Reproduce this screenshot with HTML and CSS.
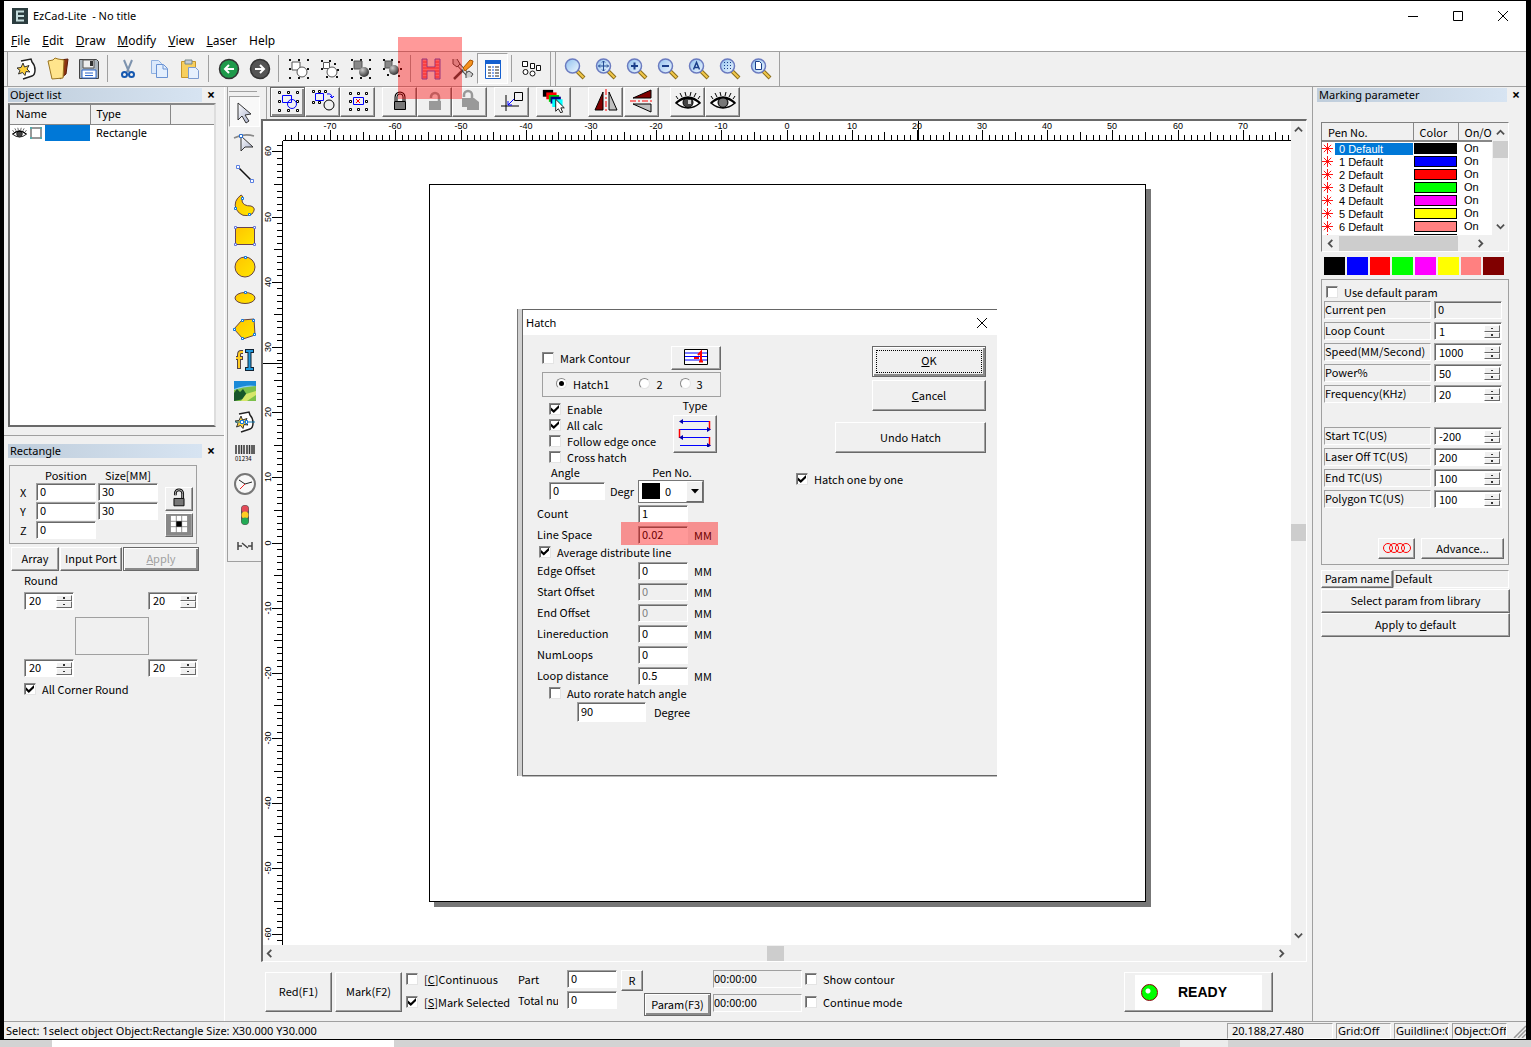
FILE: index.html
```
<!DOCTYPE html>
<html lang="en">
<head>
    <meta charset="UTF-8">
    <title>EzCad-Lite - No title</title>
    <meta name="viewport" content="width=device-width,initial-scale=1.0">
    <link rel="stylesheet" href="styles.css">
</head>
<body>

<!-- shared icon parts -->
<svg class="defs" aria-hidden="true">
    <defs>
        <linearGradient id="lens" x1="0" y1="0" x2="1" y2="1">
            <stop offset="0" stop-color="#8fc0ee"/>
            <stop offset="1" stop-color="#f0f8ff"/>
        </linearGradient>
        <linearGradient id="gold" x1="0" y1="0" x2="1" y2="1">
            <stop offset="0" stop-color="#ffc400"/>
            <stop offset="1" stop-color="#ffe600"/>
        </linearGradient>
        <linearGradient id="steel" x1="0" y1="0" x2="1" y2="1">
            <stop offset="0" stop-color="#fff"/>
            <stop offset="1" stop-color="#a8b0cc"/>
        </linearGradient>
        <radialGradient id="ball" cx=".35" cy=".3" r=".8">
            <stop offset="0" stop-color="#ccc"/>
            <stop offset="1" stop-color="#222"/>
        </radialGradient>
        <symbol id="magnifier" viewBox="0 0 24 24">
            <path d="M14 14l7 7" stroke="#8a6d1a" stroke-width="4"/>
            <path d="M14 14l6.500 6.500" stroke="#f2c84b" stroke-width="2"/>
            <circle cx="9.500" cy="9" r="7" fill="url(#lens)" stroke="#6b7bc0" stroke-width="1.500"/>
        </symbol>
        <symbol id="dots" viewBox="0 0 24 24">
            <path d="M2 2h2v2h-2zM11 2h2v2h-2zM20 2h2v2h-2zM2 11h2v2h-2zM20 11h2v2h-2zM2 20h2v2h-2zM11 20h2v2h-2zM20 20h2v2h-2z" fill="#111"/>
        </symbol>
        <symbol id="handles" viewBox="0 0 24 24">
            <path d="M2.500 2.500h2v2h-2zM11.500 2.500h2v2h-2zM20.500 2.500h2v2h-2zM2.500 11.500h2v2h-2zM20.500 11.500h2v2h-2zM2.500 20.500h2v2h-2zM11.500 20.500h2v2h-2zM20.500 20.500h2v2h-2z" fill="#fff" stroke="#000"/>
        </symbol>
        <symbol id="lock" viewBox="0 0 24 24">
            <path d="M8 12V8a4 4 0 0 1 8 0v4" fill="none" stroke="#000" stroke-width="3"/>
            <path d="M8 12V8a4 4 0 0 1 8 0v4" fill="none" stroke="#ccc"/>
            <path d="M6.500 12.500h11v8h-11z" fill="#777" stroke="#000"/>
        </symbol>
        <symbol id="eye" viewBox="0 0 26 24">
            <path d="M1 14q12-12 24 0q-12 10-24 0z" fill="#fff" stroke="#000" stroke-width="1.500"/>
            <circle cx="13" cy="13.500" r="5" fill="#444" stroke="#000"/>
            <path d="M1 14q12-10 24 0" fill="none" stroke="#000" stroke-width="2"/>
            <path d="M3 10L1 7M7 8L5 4M11 7l-1-4M15 7l1-4M19 8l2-4M23 10l2-3" stroke="#000"/>
        </symbol>
        <symbol id="chevron" viewBox="0 0 10 10">
            <path d="M1 7l4-4 4 4" fill="none" stroke="#505050" stroke-width="2"/>
        </symbol>
        <symbol id="star" viewBox="0 0 12 12">
            <path d="M6 0v12M0 6h12M2 2l8 8M10 2l-8 8" stroke="#f00"/>
        </symbol>
        <symbol id="sheet" viewBox="0 0 24 24">
            <path d="M6 4l10-2 1 3q3 3 3 8t-3 6L8 22" fill="#fff" stroke="#222" stroke-width="1.500"/>
            <path d="M8 6l1.500 4 4.500-1.500-2 3.500 3 3-4-.5-1 4-2.500-3-4 1.500 1.500-3.500-3-2.500 4-.5z" fill="#ffd23c" stroke="#333"/>
        </symbol>
    </defs>
</svg>

<div class="window">
    <header class="title-bar">
        <svg class="app-icon" viewBox="0 0 16 16"><path d="M0 0h16v16H0z" fill="#2b3d3f"/><path d="M12 3.500H5v9h7M5 8h7" fill="none" stroke="#c4dcdc" stroke-width="2"/></svg>
        <h1>EzCad-Lite &nbsp;- No title</h1>
        <div class="window-buttons">
            <button aria-label="Minimize"><svg viewBox="0 0 12 12"><path d="M1 6.500h10" stroke="#000"/></svg></button>
            <button aria-label="Maximize"><svg viewBox="0 0 12 12"><path d="M1.500 1.500h9v9h-9z" fill="none" stroke="#000"/></svg></button>
            <button aria-label="Close"><svg viewBox="0 0 12 12"><path d="M1 1l10 10M11 1L1 11" stroke="#000"/></svg></button>
        </div>
    </header>

    <nav class="menu-bar">
        <a href="#"><u>F</u>ile</a>
        <a href="#"><u>E</u>dit</a>
        <a href="#"><u>D</u>raw</a>
        <a href="#"><u>M</u>odify</a>
        <a href="#"><u>V</u>iew</a>
        <a href="#"><u>L</u>aser</a>
        <a href="#">Help</a>
    </nav>

    <div class="toolbar">
        <div class="tool-group">
            <button aria-label="New"><svg viewBox="0 0 24 24"><use href="#sheet"/></svg></button>
            <button aria-label="Open"><svg viewBox="0 0 24 24"><path d="M14 3l8-1-2 15-6 5z" fill="#8c3412" stroke="#5a1a08"/><path d="M2 4l5-1 2-2 3 1 6 1-1 18-11 1z" fill="#ffe48c" stroke="#9a7420"/></svg></button>
            <button aria-label="Save"><svg viewBox="0 0 24 24"><path d="M2.500 2.500h17l2 2v17h-19z" fill="#aab4bc" stroke="#444"/><path d="M6 3h11v8H6z" fill="#eee" stroke="#555"/><path d="M13 4h3v5h-3z" fill="#333"/><path d="M5 13h14v8H5z" fill="#fff" stroke="#2a66cc"/><path d="M8 16h8M8 18.500h8" stroke="#2a66cc"/></svg></button>
            <i class="sep"></i>
            <button aria-label="Cut"><svg viewBox="0 0 24 24"><path d="M8 3l5 12M16 3l-5 12" stroke="#7d93ae" stroke-width="2"/><circle cx="8.500" cy="17.500" r="2.500" fill="none" stroke="#1558b0" stroke-width="2"/><circle cx="15.500" cy="17.500" r="2.500" fill="none" stroke="#1558b0" stroke-width="2"/></svg></button>
            <button aria-label="Copy"><svg viewBox="0 0 24 24"><path d="M4.500 3.500h7l3 3v10h-10z" fill="#dbe9fb" stroke="#8fb0e0"/><path d="M9.500 7.500h7l4 4v9h-11z" fill="#e4effd" stroke="#6a93d4"/><path d="M16 8v4h4" fill="none" stroke="#6a93d4"/></svg></button>
            <button aria-label="Paste"><svg viewBox="0 0 24 24"><path d="M3.500 4.500h14v16h-14z" fill="#f7cf5e" stroke="#c7962a"/><path d="M7 3h7v4H7z" fill="#c4ccd8" stroke="#788"/><path d="M10.500 10.500h7l3 3v8h-10z" fill="#e6f0fd" stroke="#7c9bd0"/></svg></button>
            <i class="sep"></i>
            <button aria-label="Undo"><svg viewBox="0 0 24 24"><circle cx="12" cy="12" r="9.500" fill="#1f9a4b" stroke="#333" stroke-width="1.500"/><path d="M17 12H8M12 8l-4 4 4 4" fill="none" stroke="#fff" stroke-width="2"/></svg></button>
            <button aria-label="Redo"><svg viewBox="0 0 24 24"><circle cx="12" cy="12" r="9.500" fill="#555" stroke="#333" stroke-width="1.500"/><path d="M7 12h9M12 8l4 4-4 4" fill="none" stroke="#fff" stroke-width="2"/></svg></button>
            <i class="sep"></i>
            <button aria-label="Combine"><svg viewBox="0 0 24 24"><use href="#dots"/><path d="M5 5h8v8H5z" fill="#fff" stroke="#555"/><circle cx="15" cy="15" r="5" fill="#fff" stroke="#555"/></svg></button>
            <button aria-label="Uncombine"><svg viewBox="0 0 24 24"><path d="M3 3h2v2H3zM11 3h2v2h-2zM3 11h2v2H3zM16 6h2v2h-2zM19 12h2v2h-2zM18 19h2v2h-2zM8 19h2v2H8z" fill="#111"/><path d="M5.500 5.500h6v6h-6z" fill="#fff" stroke="#555"/><circle cx="14" cy="15" r="5" fill="#fff" stroke="#555"/></svg></button>
            <button aria-label="Group"><svg viewBox="0 0 24 24"><use href="#dots"/><path d="M5 4h8v8H5z" fill="#888" stroke="#555"/><circle cx="15" cy="15" r="5" fill="url(#ball)"/></svg></button>
            <button aria-label="Ungroup"><svg viewBox="0 0 24 24"><path d="M3 2h2v2H3zM11 2h2v2h-2zM3 11h2v2H3zM18 4h2v2h-2zM20 11h2v2h-2zM18 18h2v2h-2zM7 17h2v2H7z" fill="#111"/><path d="M5 4h7v7H5z" fill="#888" stroke="#555"/><circle cx="14" cy="13" r="5" fill="url(#ball)"/></svg></button>
            <i class="sep"></i>
            <button aria-label="Hatch"><svg viewBox="0 0 24 24"><path d="M3 2h5v8h8V2h5v20h-5v-8H8v8H3z" fill="#f99" stroke="#55c"/><path d="M4 5h4M4 8h4M4 11h16M4 14h4M4 17h4M4 20h4M16 5h4M16 8h4M16 14h4M16 17h4M16 20h4" stroke="#e44"/></svg></button>
            <button aria-label="Options"><svg viewBox="0 0 24 24"><path d="M6 5l12 13" stroke="#444" stroke-width="4"/><path d="M6 5l12 13" stroke="#ddd" stroke-width="2"/><path d="M3 2v5l4 3 3-3-3-5M16 21v-5l3-2 4 3-2 3" fill="#ccc" stroke="#444"/><path d="M13 11l7-8 3 1-1 4-7 6z" fill="#f5921e" stroke="#a85400"/><path d="M13 13l-9 9" stroke="#444" stroke-width="2.500"/></svg></button>
            <button class="active" aria-label="Parameter list"><svg viewBox="0 0 24 24"><path d="M4.500 3.500h15v18h-15z" fill="#fff" stroke="#1560d0"/><path d="M4 3h16v4H4z" fill="#1560d0"/><path d="M7 10h3M7 13h3M7 16h3M7 19h3M14 10h4M14 13h4M14 16h4M14 19h4" stroke="#222"/><path d="M11 10h2M11 13h2M11 16h2M11 19h2" stroke="#15d"/></svg></button>
            <i class="sep"></i>
            <button aria-label="Sort objects"><svg viewBox="0 0 24 24"><path d="M2.500 4.500h5v5h-5zM10.500 6.500h4v5h-4zM16.500 8.500h4v5h-4z" fill="#fff" stroke="#111"/><circle cx="5.500" cy="15" r="2.500" fill="#fff" stroke="#111"/><circle cx="12.500" cy="16.500" r="2.500" fill="#fff" stroke="#111"/></svg></button>
        </div>
        <div class="tool-group">
            <button aria-label="Zoom"><svg viewBox="0 0 24 24"><use href="#magnifier"/></svg></button>
            <button aria-label="Pan"><svg viewBox="0 0 24 24"><use href="#magnifier"/><path d="M9.500 4v10M4.500 9h10M8 5.500l1.500-1.500 1.500 1.500M8 12.500l1.500 1.500 1.500-1.500M6 7.500l-1.500 1.500L6 10.500M13 7.500l1.500 1.500-1.500 1.500" fill="none" stroke="#234a94"/></svg></button>
            <button aria-label="Zoom in"><svg viewBox="0 0 24 24"><use href="#magnifier"/><path d="M9.500 5.500v7M6 9h7" stroke="#1a3f8a" stroke-width="2"/></svg></button>
            <button aria-label="Zoom out"><svg viewBox="0 0 24 24"><use href="#magnifier"/><path d="M6 9h7" stroke="#1a3f8a" stroke-width="2"/></svg></button>
            <button aria-label="Zoom all"><svg viewBox="0 0 24 24"><use href="#magnifier"/><path d="M6.500 12.500l3-7 3 7M7.500 10.500h4" fill="none" stroke="#1a3f8a" stroke-width="1.500"/></svg></button>
            <button aria-label="Zoom selection"><svg viewBox="0 0 24 24"><use href="#magnifier"/><path d="M6 5h1v1H6zM9 5h1v1H9zM12 5h1v1h-1zM6 8h1v1H6zM12 8h1v1h-1zM9 8h1v1H9zM6 11h1v1H6zM9 11h1v1H9zM12 11h1v1h-1z" fill="#1a3f8a"/></svg></button>
            <button aria-label="Zoom page"><svg viewBox="0 0 24 24"><use href="#magnifier"/><path d="M6.500 4.500h4l2 2v6h-6z" fill="#fff" stroke="#1a3f8a"/></svg></button>
        </div>
    </div>

    <div class="workspace">
        <aside class="left-panel">
            <section class="object-panel">
                <div class="panel-title"><h2>Object list</h2><button aria-label="Close object list">×</button></div>
                <div class="object-list">
                    <table>
                        <thead><tr><th>Name</th><th>Type</th><th></th></tr></thead>
                        <tbody>
                        <tr>
                            <td>
                                <div class="object-name">
                                    <svg class="mini-eye" viewBox="0 0 26 24"><use href="#eye"/></svg>
                                    <svg class="mini-rect" viewBox="0 0 14 14"><path d="M2 2h10v10H2z" fill="#fff" stroke="#333"/><path d="M1 1h2v2H1zM11 1h2v2h-2zM1 11h2v2H1zM11 11h2v2h-2z" fill="#5aa"/></svg>
                                    <span></span>
                                </div>
                            </td>
                            <td>Rectangle</td>
                            <td></td>
                        </tr>
                        </tbody>
                    </table>
                </div>
            </section>

            <section class="rect-panel">
                <div class="panel-title"><h2>Rectangle</h2><button aria-label="Close rectangle panel">×</button></div>
                <div class="position-box">
                    <div class="position-grid">
                        <span></span><span class="col-head">Position</span><span class="col-head">Size[MM]</span>
                        <label for="pos-x">X</label><input id="pos-x" class="field" value="0"><input class="field" aria-label="Width" value="30">
                        <label for="pos-y">Y</label><input id="pos-y" class="field" value="0"><input class="field" aria-label="Height" value="30">
                        <label for="pos-z">Z</label><input id="pos-z" class="field" value="0">
                    </div>
                    <div class="position-buttons">
                        <button class="btn" aria-label="Lock ratio"><svg viewBox="0 0 24 24"><path d="M8 9V7a4 4 0 0 1 8 0v5" fill="none" stroke="#000" stroke-width="3"/><path d="M8 9V7a4 4 0 0 1 8 0v5" fill="none" stroke="#ccc"/><path d="M6.500 12.500h11v8h-11z" fill="#777" stroke="#000"/></svg></button>
                        <button class="btn anchor" aria-label="Anchor point"><svg viewBox="0 0 20 20"><path d="M1 1h18v18H1z" fill="#fff"/><path d="M7 0v20M13 0v20M0 7h20M0 13h20" stroke="#888"/><path d="M7 7h6v6H7z"/></svg></button>
                    </div>
                </div>
                <div class="rect-actions">
                    <button class="btn">Array</button>
                    <button class="btn">Input Port</button>
                    <button class="btn default" disabled><u>A</u>pply</button>
                </div>
                <div class="round">
                    <div class="round-title">Round</div>
                    <div class="round-row">
                        <span class="spin"><input aria-label="Top left" value="20"><span><button></button><button></button></span></span>
                        <span class="spin"><input aria-label="Top right" value="20"><span><button></button><button></button></span></span>
                    </div>
                    <div class="round-preview"></div>
                    <div class="round-row">
                        <span class="spin"><input aria-label="Bottom left" value="20"><span><button></button><button></button></span></span>
                        <span class="spin"><input aria-label="Bottom right" value="20"><span><button></button><button></button></span></span>
                    </div>
                    <label class="check"><input type="checkbox" checked>All Corner Round</label>
                </div>
            </section>
        </aside>

        <div class="draw-column">
            <div class="draw-tools">
                <button class="active" aria-label="Pick"><svg viewBox="0 0 24 24"><path d="M5 3l13 11-6 1 4 6-3 2-4-7-4 4z" fill="url(#steel)" stroke="#333"/></svg></button>
                <button aria-label="Edit node"><svg viewBox="0 0 24 24"><path d="M1 7q10-5 20-2" fill="none" stroke="#888" stroke-width="1.500"/><path d="M8 5v15l4-4h8z" fill="url(#steel)" stroke="#333"/><path d="M6.500 3.500h3v3h-3z" fill="#fff" stroke="#2a6fd0"/></svg></button>
                <button aria-label="Line"><svg viewBox="0 0 24 24"><path d="M5 5l14 14" stroke="#111" stroke-width="1.500"/><path d="M3.500 3.500h3v3h-3zM17.500 17.500h3v3h-3z" fill="#fff" stroke="#5a7fe0"/></svg></button>
                <button aria-label="Curve"><svg viewBox="0 0 24 24"><path d="M8 2q-8 6-5 14 6 10 16 5 5-6-1-8-8 0-9-5 2-5-1-6z" fill="url(#gold)" stroke="#644"/><path d="M8.500 4.500h2v2h-2zM1.500 14.500h2v2h-2zM15.500 20.500h2v2h-2z" fill="#fff" stroke="#17d"/></svg></button>
                <button aria-label="Rectangle"><svg viewBox="0 0 24 24"><path d="M2.500 3.500h19v17h-19z" fill="url(#gold)" stroke="#645"/><path d="M1.500 2.500h2v2h-2zM20.500 2.500h2v2h-2zM1.500 19.500h2v2h-2zM20.500 19.500h2v2h-2z" fill="#fff" stroke="#67d"/></svg></button>
                <button aria-label="Circle"><svg viewBox="0 0 24 24"><circle cx="12" cy="12" r="10" fill="url(#gold)" stroke="#644"/><path d="M11.500 1.500h2v2h-2z" fill="#fff" stroke="#17d"/></svg></button>
                <button aria-label="Ellipse"><svg viewBox="0 0 24 24"><ellipse cx="12" cy="12" rx="10" ry="5.500" fill="url(#gold)" stroke="#644"/><path d="M11.500 5.500h2v2h-2z" fill="#fff" stroke="#17d"/></svg></button>
                <button aria-label="Polygon"><svg viewBox="0 0 24 24"><path d="M1 12l8-9 12-1 1 16-12 4z" fill="url(#gold)" stroke="#644"/><path d="M.5 11.500h2v2h-2zM8.500 2.500h2v2h-2zM19.500 2.500h2v2h-2zM20.500 16.500h2v2h-2zM8.500 20.500h2v2h-2z" fill="#fff" stroke="#17d"/></svg></button>
                <button aria-label="Text"><svg viewBox="0 0 24 24"><path d="M10 4H8Q6 4 6 7v14M3 10h7" fill="none" stroke="#544" stroke-width="4"/><path d="M10 4H8Q6 4 6 7v13M3 10h6" fill="none" stroke="#fc2" stroke-width="2"/><path d="M12 3h9M16.500 3v18M12 21h9" stroke="#123" stroke-width="4"/><path d="M13 3h7M16.500 3v18M13 21h7" stroke="#29d" stroke-width="2"/></svg></button>
                <button aria-label="Bitmap"><svg viewBox="0 0 24 24"><path d="M1 2h22v20H1z" fill="#8fd0f4"/><path d="M1 2h22v5q-9-2-22 3z" fill="#1a8ad8"/><path d="M1 11q8-3 22-4v15H1z" fill="#7cc04a"/><path d="M1 14l3-4 3 3 3-3 4 6 2 3-15 3z" fill="#17562a"/><path d="M13 15l10-3v4l-9 6H8z" fill="#d6e66a"/></svg></button>
                <button aria-label="Vector file"><svg viewBox="0 0 24 24"><use href="#sheet"/><path d="M2 12h20" stroke="#17a"/><path d="M7.500 10.500h3v3h-3zM12.500 10.500h2v3h-2z" fill="#fff" stroke="#17d"/></svg></button>
                <button aria-label="Barcode"><svg viewBox="0 0 24 24"><path d="M3 4v9M6 4v9M8.500 4v9M11 4v9M14 4v9M16.500 4v9M19 4v9M21 4v9" stroke="#333" stroke-width="1.500"/><text x="2" y="20" font-size="6">01234</text></svg></button>
                <button aria-label="Timer"><svg viewBox="0 0 24 24"><circle cx="12" cy="12" r="10" fill="#f8f8f8" stroke="#777" stroke-width="2"/><path d="M6 8l6 4 7-2" fill="none" stroke="#222"/><path d="M12 12l-5 5" stroke="#e22"/></svg></button>
                <button aria-label="Input output"><svg viewBox="0 0 24 24"><rect x="8" y="2" width="8" height="20" rx="4" fill="#555"/><circle cx="12" cy="6" r="3.500" fill="#e34a58"/><circle cx="12" cy="12" r="3.500" fill="#fc2"/><circle cx="12" cy="18" r="3.500" fill="#2a5"/></svg></button>
                <button aria-label="Extend axis"><svg viewBox="0 0 24 24"><path d="M5 8v8M5 12h4M9 9l6 5M15 12h4M19 8v8" fill="none" stroke="#444" stroke-width="1.500"/></svg></button>
            </div>
        </div>

        <main class="center">
            <div class="edit-bar">
                <button class="btn default" aria-label="Move"><svg viewBox="0 0 24 24"><use href="#handles"/><path d="M6.500 6.500h9v7h-9z" fill="none" stroke="#00f"/><circle cx="16" cy="15" r="4.500" fill="none" stroke="#00f"/></svg></button>
                <button class="btn" aria-label="Rotate"><svg viewBox="0 0 24 24"><path d="M1.500 1.500h2v2h-2zM7.500 1.500h2v2h-2zM13.500 1.500h2v2h-2zM1.500 12.500h2v2h-2zM7.500 12.500h2v2h-2z" fill="#fff" stroke="#000"/><path d="M4.500 4.500h8v7h-8zM16 5q5-1 5 4M19 7l2 2 2-2" fill="none" stroke="#00f"/><circle cx="18" cy="16" r="5" fill="none" stroke="#000"/></svg></button>
                <button class="btn" aria-label="Select handles"><svg viewBox="0 0 24 24"><path d="M3.500 3.500h2v2h-2zM11.500 3.500h2v2h-2zM19.500 3.500h2v2h-2zM3.500 11.500h2v2h-2zM19.500 11.500h2v2h-2zM3.500 19.500h2v2h-2zM11.500 19.500h2v2h-2zM19.500 19.500h2v2h-2z" fill="#fff" stroke="#000"/><path d="M7.500 8.500h10v7h-10z" fill="none" stroke="#00f"/><path d="M10 10l4 4M14 10l-4 4" stroke="#f00"/></svg></button>
                <button class="btn gap-s" aria-label="Lock"><svg viewBox="0 0 24 24"><use href="#lock"/></svg></button>
                <button class="btn" aria-label="Unlock"><svg viewBox="0 0 24 24"><path d="M8 9V8a4 4 0 0 1 8 0v4" fill="none" stroke="#999" stroke-width="2.500"/><path d="M6 12h12v9H6z" fill="#999"/></svg></button>
                <button class="btn" aria-label="Unlock all"><svg viewBox="0 0 24 24"><path d="M6 8V6a4 4 0 0 1 8 0v5" fill="none" stroke="#999" stroke-width="2.500"/><path d="M4 9h12l5 4v8H9v-3H4z" fill="#999"/></svg></button>
                <button class="btn gap-s" aria-label="Put to origin"><svg viewBox="0 0 24 24"><path d="M6 6v16M1 17h18M14.500 3.500h8v8h-8z" fill="none" stroke="#000"/><path d="M14 10l-6 6M8 12v4h4" fill="none" stroke="#00f"/></svg></button>
                <button class="btn gap-s" aria-label="Pick by colour"><svg viewBox="0 0 28 28"><path d="M1 1h12v8H1z"/><path d="M5 4h12v8H5z" fill="#f00"/><path d="M8 7h12v8H8z" fill="#0c0"/><path d="M10 9h12v8H10z" fill="#008"/><path d="M12 12h12v9H12z" fill="#0ff"/><path d="M16 12v14l3-3 3 5 2-1-2-5h4z" fill="#fff" stroke="#000"/></svg></button>
                <button class="btn gap-l" aria-label="Mirror horizontally"><svg viewBox="0 0 24 24"><path d="M9 3v18H1z" fill="#800000" stroke="#000"/><path d="M15 3v18h8z" fill="#c0c0c0" stroke="#000"/><path d="M12 0v24" stroke="#f00" stroke-dasharray="6 2 2 2"/></svg></button>
                <button class="btn gap-xs" aria-label="Mirror vertically"><svg viewBox="0 0 24 24"><path d="M21 9V1L3 9z" fill="#800000" stroke="#000"/><path d="M21 15v8L3 15z" fill="#c0c0c0" stroke="#000"/><path d="M0 12h24" stroke="#f00" stroke-dasharray="6 2 2 2"/></svg></button>
                <button class="btn gap-m" aria-label="Show"><svg class="wide" viewBox="0 0 26 24"><use href="#eye"/><path d="M13 12h3M13 14h3" stroke="#fff" stroke-width="1.500"/></svg></button>
                <button class="btn" aria-label="Hide"><svg class="wide" viewBox="0 0 26 24"><use href="#eye"/><circle cx="13" cy="13.500" r="4" fill="#777"/></svg></button>
            </div>

            <div class="canvas-frame">
                <div class="ruler-corner"></div>
                <svg class="ruler ruler-top" id="ruler-top"></svg>
                <div class="scroll-v">
                    <svg viewBox="0 0 10 10"><use href="#chevron"/></svg>
                    <i></i>
                    <svg class="down" viewBox="0 0 10 10"><use href="#chevron"/></svg>
                </div>
                <svg class="ruler ruler-left" id="ruler-left"></svg>
                <div class="stage">
                    <div class="paper"></div>

                    <div class="dialog" role="dialog" aria-labelledby="hatch-title">
                        <div class="dialog-inner">
                            <div class="dialog-title">
                                <h2 id="hatch-title">Hatch</h2>
                                <button aria-label="Close dialog"><svg viewBox="0 0 12 12"><path d="M1 1l10 10M11 1L1 11" stroke="#000"/></svg></button>
                            </div>
                            <div class="dialog-body">
                                <div class="hatch-form">
                                    <div class="contour-row">
                                        <label class="check"><input type="checkbox">Mark Contour</label>
                                        <button class="btn" aria-label="Contour order"><svg viewBox="0 0 24 16"><path d="M.5.5h23v15H.5z" fill="#fff" stroke="#000"/><path d="M1 4h22M1 7.500h22M1 11h22" stroke="#00f"/><path d="M17 13V3l-3 3M10 9h5M15 12.500h4" fill="none" stroke="#f00" stroke-width="2"/></svg></button>
                                    </div>
                                    <div class="hatch-set">
                                        <label class="check"><input type="radio" name="set" checked>Hatch1</label>
                                        <label class="check"><input type="radio" name="set">2</label>
                                        <label class="check"><input type="radio" name="set">3</label>
                                    </div>
                                    <div class="options-row">
                                        <div class="options">
                                            <label class="check"><input type="checkbox" checked>Enable</label>
                                            <label class="check"><input type="checkbox" checked>All calc</label>
                                            <label class="check"><input type="checkbox">Follow edge once</label>
                                            <label class="check"><input type="checkbox">Cross hatch</label>
                                        </div>
                                        <div class="type">
                                            <span>Type</span>
                                            <button class="btn" aria-label="Hatch type"><svg viewBox="0 0 34 28"><path d="M2 2.500h30M2 10.500h30M2 18.500h30M2 26.500h30" stroke="#00f"/><path d="M31.500 2v9M1.500 10v9M31.500 18v9" stroke="#f00" stroke-width="1.500"/><path d="M5 0v5L1 2.500zM29 8v5l4-2.500zM5 16v5l-4-2.500zM29 24v5l4-2.500z" fill="#00a"/></svg></button>
                                        </div>
                                    </div>
                                    <div class="angle-grid">
                                        <label for="angle">Angle</label><span></span><label for="pen">Pen No.</label>
                                        <input id="angle" class="field" value="0">
                                        <span>Degr</span>
                                        <div class="combo"><i></i><select id="pen"><option>0</option></select><b><svg viewBox="0 0 8 5"><path d="M0 0h8L4 4.500z"/></svg></b></div>
                                    </div>
                                    <div class="form-row"><label for="count">Count</label><input id="count" class="field" value="1"></div>
                                    <div class="form-row marked"><label for="space">Line Space</label><input id="space" class="field" value="0.02"><span>MM</span></div>
                                    <label class="check average"><input type="checkbox" checked>Average distribute line</label>
                                    <div class="form-row"><label for="edge">Edge Offset</label><input id="edge" class="field" value="0"><span>MM</span></div>
                                    <div class="form-row"><label for="start">Start Offset</label><input id="start" class="field" value="0" disabled><span>MM</span></div>
                                    <div class="form-row"><label for="end">End Offset</label><input id="end" class="field" value="0" disabled><span>MM</span></div>
                                    <div class="form-row"><label for="reduction">Linereduction</label><input id="reduction" class="field" value="0"><span>MM</span></div>
                                    <div class="form-row"><label for="loops">NumLoops</label><input id="loops" class="field" value="0"></div>
                                    <div class="form-row"><label for="distance">Loop distance</label><input id="distance" class="field" value="0.5"><span>MM</span></div>
                                    <label class="check auto"><input type="checkbox">Auto rorate hatch angle</label>
                                    <div class="degree-row"><input id="degree" class="field" value="90"><label for="degree">Degree</label></div>
                                </div>
                                <div class="dialog-actions">
                                    <button class="btn default ok"><span><u>O</u>K</span></button>
                                    <button class="btn"><u>C</u>ancel</button>
                                    <button class="btn undo">Undo Hatch</button>
                                    <label class="check"><input type="checkbox" checked>Hatch one by one</label>
                                </div>
                            </div>
                        </div>
                    </div>
                </div>
                <div class="scroll-h">
                    <svg class="left" viewBox="0 0 10 10"><use href="#chevron"/></svg>
                    <i></i>
                    <svg class="right" viewBox="0 0 10 10"><use href="#chevron"/></svg>
                </div>
            </div>

            <div class="mark-bar">
                <button class="btn big">Red(F1)</button>
                <button class="btn big">Mark(F2)</button>
                <div class="mark-checks">
                    <label class="check"><input type="checkbox"><span>[<u>C</u>]Continuous</span></label>
                    <label class="check"><input type="checkbox" checked><span>[<u>S</u>]Mark Selected</span></label>
                </div>
                <div class="counts">
                    <label for="part">Part</label><input id="part" class="field" value="0">
                    <label for="total">Total num</label><input id="total" class="field" value="0">
                </div>
                <button class="btn reset">R</button>
                <button class="btn default param">Param(F3)</button>
                <div class="times">
                    <output class="readout">00:00:00</output>
                    <output class="readout">00:00:00</output>
                </div>
                <div class="mark-checks modes">
                    <label class="check"><input type="checkbox">Show contour</label>
                    <label class="check"><input type="checkbox">Continue mode</label>
                </div>
                <button class="btn ready"><span><i></i>READY</span></button>
            </div>
        </main>

        <aside class="right-panel">
            <div class="panel-title"><h2>Marking parameter</h2><button aria-label="Close marking parameter">×</button></div>
            <div class="pen-list">
                <div class="pen-clip">
                    <table>
                        <thead><tr><th>Pen No.</th><th>Color</th><th>On/Off</th></tr></thead>
                        <tbody>
                        <tr class="selected"><td><svg viewBox="0 0 12 12"><use href="#star"/></svg><span>0 Default</span></td><td><i class="c0"></i></td><td>On</td></tr>
                        <tr><td><svg viewBox="0 0 12 12"><use href="#star"/></svg><span>1 Default</span></td><td><i class="c1"></i></td><td>On</td></tr>
                        <tr><td><svg viewBox="0 0 12 12"><use href="#star"/></svg><span>2 Default</span></td><td><i class="c2"></i></td><td>On</td></tr>
                        <tr><td><svg viewBox="0 0 12 12"><use href="#star"/></svg><span>3 Default</span></td><td><i class="c3"></i></td><td>On</td></tr>
                        <tr><td><svg viewBox="0 0 12 12"><use href="#star"/></svg><span>4 Default</span></td><td><i class="c4"></i></td><td>On</td></tr>
                        <tr><td><svg viewBox="0 0 12 12"><use href="#star"/></svg><span>5 Default</span></td><td><i class="c5"></i></td><td>On</td></tr>
                        <tr><td><svg viewBox="0 0 12 12"><use href="#star"/></svg><span>6 Default</span></td><td><i class="c6"></i></td><td>On</td></tr>
                        <tr><td><svg viewBox="0 0 12 12"><use href="#star"/></svg><span>7 Default</span></td><td><i class="c7"></i></td><td>On</td></tr>
                        </tbody>
                    </table>
                </div>
                <div class="pen-scroll-v">
                    <svg viewBox="0 0 10 10"><use href="#chevron"/></svg>
                    <i></i>
                    <svg class="down" viewBox="0 0 10 10"><use href="#chevron"/></svg>
                </div>
                <div class="pen-scroll-h">
                    <svg class="left" viewBox="0 0 10 10"><use href="#chevron"/></svg>
                    <i></i>
                    <svg class="right" viewBox="0 0 10 10"><use href="#chevron"/></svg>
                </div>
            </div>
            <div class="swatches"><i class="c0"></i><i class="c1"></i><i class="c2"></i><i class="c3"></i><i class="c4"></i><i class="c5"></i><i class="c6"></i><i class="c7"></i></div>

            <div class="param-box">
                <label class="check"><input type="checkbox">Use default param</label>
                <div class="param-grid">
                    <span class="readout">Current pen</span><output class="field">0</output>
                    <label class="readout" for="p1">Loop Count</label><span class="spin"><input id="p1" value="1"><span><button></button><button></button></span></span>
                    <label class="readout" for="p2">Speed(MM/Second)</label><span class="spin"><input id="p2" value="1000"><span><button></button><button></button></span></span>
                    <label class="readout" for="p3">Power%</label><span class="spin"><input id="p3" value="50"><span><button></button><button></button></span></span>
                    <label class="readout" for="p4">Frequency(KHz)</label><span class="spin"><input id="p4" value="20"><span><button></button><button></button></span></span>
                </div>
                <div class="param-grid">
                    <label class="readout" for="p5">Start TC(US)</label><span class="spin"><input id="p5" value="-200"><span><button></button><button></button></span></span>
                    <label class="readout" for="p6">Laser Off TC(US)</label><span class="spin"><input id="p6" value="200"><span><button></button><button></button></span></span>
                    <label class="readout" for="p7">End TC(US)</label><span class="spin"><input id="p7" value="100"><span><button></button><button></button></span></span>
                    <label class="readout" for="p8">Polygon TC(US)</label><span class="spin"><input id="p8" value="100"><span><button></button><button></button></span></span>
                </div>
                <div class="param-actions">
                    <button class="btn wobble" aria-label="Wobble"><svg viewBox="0 0 30 12"><g fill="none" stroke="#f00"><circle cx="6" cy="6" r="4.500"/><circle cx="12" cy="6" r="4.500"/><circle cx="18" cy="6" r="4.500"/><circle cx="24" cy="6" r="4.500"/></g></svg></button>
                    <button class="btn advance">Advance...</button>
                </div>
            </div>
            <div class="param-name"><button class="btn">Param name</button><span class="readout">Default</span></div>
            <button class="btn wide-btn">Select param from library</button>
            <button class="btn wide-btn">Apply to&nbsp;<u>d</u>efault</button>
        </aside>
    </div>

    <footer class="status-bar">
        <span class="message">Select: 1select object Object:Rectangle Size: X30.000 Y30.000</span>
        <span class="cell coords">20.188,27.480</span>
        <span class="cell">Grid:Off</span>
        <span class="cell">Guildline:Off</span>
        <span class="cell">Object:Off</span>
        <svg viewBox="0 0 14 14"><path d="M2 14L14 2M6 14l8-8M10 14l4-4" stroke="#999" stroke-width="1.500"/></svg>
    </footer>

    <div class="highlight"></div>
</div>
<div class="taskbar"><i></i><b></b></div>

<script src="ruler.js"></script>
</body>
</html>
```
FILE: styles.css
```
* {
    box-sizing: border-box;
}

html, body {
    height: 100%;
}

body {
    margin: 0;
    display: flex;
    flex-direction: column;
    background-color: #000;
    color: #000;
    font-family: "Noto Sans CJK JP", "Noto Sans", sans-serif;
    font-size: 11px;
    line-height: 14px;
    white-space: nowrap;
    overflow: hidden;
}

button, input, select, output {
    margin: 0;
    padding: 0;
    border: 0;
    border-radius: 0;
    background: none;
    color: inherit;
    font: inherit;
    min-width: 0;
}

h1, h2 {
    margin: 0;
    font-size: 11px;
    font-weight: normal;
}

i, b {
    display: block;
    font-style: normal;
}

svg {
    display: block;
    flex: none;
}

.defs {
    position: absolute;
    width: 0;
    height: 0;
}

.window {
    position: relative;
    flex: 1;
    min-height: 0;
    display: flex;
    flex-direction: column;
    margin: 1px 5px 1px 4px;
    background-color: #f0f0f0;
}

/* title and menu */
.title-bar,
.menu-bar,
.status-bar,
.panel-title,
.dialog-title,
.object-list {
    font-family: "Noto Sans", sans-serif;
    font-size: 11px;
}

.title-bar {
    height: 29px;
    display: flex;
    align-items: center;
    padding-left: 8px;
    background-color: #fff;
}

.title-bar h1 {
    flex: 1;
    padding-left: 5px;
}

.app-icon {
    width: 16px;
    height: 16px;
}

.window-buttons {
    display: flex;
    margin-right: 1px;
}

.window-buttons button {
    width: 45px;
    height: 28px;
    display: grid;
    place-items: center;
}

.window-buttons svg {
    width: 12px;
    height: 12px;
}

.menu-bar {
    height: 21px;
    display: flex;
    align-items: center;
    gap: 12px;
    padding-left: 7px;
    font-size: 12px;
    background-color: #fff;
}

.menu-bar a {
    color: inherit;
    text-decoration: none;
}

/* main toolbar */
.toolbar {
    height: 36px;
    display: flex;
    border-top: 1px solid #a0a0a0;
    border-bottom: 1px solid #a0a0a0;
}

.tool-group {
    display: flex;
    align-items: center;
    padding: 0 3px 1px;
    border-left: 1px solid #a0a0a0;
    border-right: 1px solid #a0a0a0;
    margin-left: 3px;
}

.tool-group + .tool-group {
    margin-left: 4px;
}

.tool-group button,
.draw-tools button {
    width: 31px;
    height: 31px;
    display: grid;
    place-items: center;
}

.tool-group svg,
.draw-tools svg {
    width: 24px;
    height: 24px;
}

.tool-group button.active,
.draw-tools button.active {
    border: 1px solid;
    border-color: #a0a0a0 #fff #fff #a0a0a0;
    background-color: #f8f8f8;
}

.sep {
    width: 1px;
    height: 27px;
    margin: 0 4px 0 3px;
    background-color: #a0a0a0;
}

.highlight {
    position: absolute;
    left: 394px;
    top: 36px;
    width: 64px;
    height: 62px;
    background-color: rgba(255, 0, 0, .4);
}

/* classic controls */
.btn {
    display: flex;
    align-items: center;
    justify-content: center;
    padding-bottom: 2px;
    background-color: #f0f0f0;
    border: 1px solid;
    border-color: #fff #696969 #696969 #fff;
    box-shadow: inset -1px -1px 0 #a0a0a0;
}

.btn.default {
    border-color: #696969;
    box-shadow: inset 1px 1px 0 #fff, inset -2px -2px 0 #8a8a8a;
}

.btn:disabled {
    color: #a0a0a0;
}

.field,
.spin {
    height: 18px;
    background-color: #fff;
    border: 1px solid;
    border-color: #a0a0a0 #fff #fff #a0a0a0;
    box-shadow: inset 1px 1px 0 #696969;
}

.field {
    padding: 0 3px 2px;
}

.field:disabled,
output.field {
    background-color: #f0f0f0;
    color: #808080;
}

output.field {
    color: #000;
}

.spin {
    display: flex;
    padding: 2px 1px 1px 2px;
}

.spin input {
    flex: 1;
    width: 0;
    padding: 0 0 2px 2px;
}

.spin span {
    width: 16px;
    display: flex;
    flex-direction: column;
}

.spin button {
    flex: 1;
    background: radial-gradient(circle at center, #333 1px, #f0f0f0 1px);
    border: 1px solid;
    border-color: #fff #696969 #696969 #fff;
}

.readout {
    height: 18px;
    border: 1px solid;
    border-color: #a0a0a0 #fff #fff #a0a0a0;
    overflow: hidden;
}

.check {
    display: flex;
    align-items: center;
    gap: 6px;
}

.check input {
    appearance: none;
    flex: none;
    width: 12px;
    height: 12px;
    background-color: #fff;
    border: 1px solid;
    border-color: #888 #e4e4e4 #e4e4e4 #888;
    box-shadow: inset 1px 1px 0 #696969;
    display: grid;
    place-items: center;
}

.check input[type="radio"] {
    border-radius: 50%;
    width: 11px;
    height: 11px;
    box-shadow: none;
}

.check input[type="checkbox"]:checked::before {
    content: "";
    width: 8px;
    height: 8px;
    background-color: #000;
    clip-path: polygon(0 30%, 35% 62%, 100% 0, 100% 38%, 35% 100%, 0 68%);
}

.check input[type="radio"]:checked::before {
    content: "";
    width: 5px;
    height: 5px;
    border-radius: 50%;
    background-color: #000;
}

.panel-title {
    display: flex;
    align-items: center;
    height: 14px;
}

.panel-title h2 {
    flex: 1;
    padding-left: 2px;
    background: linear-gradient(to right, #bfcddb, #d7e4f2);
}

.panel-title button {
    width: 18px;
    font-size: 14px;
    font-weight: bold;
}

/* left column */
.workspace {
    flex: 1;
    min-height: 0;
    display: flex;
}

.left-panel {
    width: 221px;
    display: flex;
    flex-direction: column;
    border-right: 1px solid #fff;
}

.object-panel {
    flex: 37;
    min-height: 0;
    display: flex;
    flex-direction: column;
    padding: 1px 4px 8px 4px;
    border-bottom: 1px solid #a0a0a0;
}

.rect-panel {
    flex: 63;
    padding: 8px 4px 0 4px;
}

.object-list {
    flex: 1;
    margin: 1px 4px 0 0;
    background-color: #fff;
    border: 2px solid;
    border-color: #888 #ddd #696969 #696969;
}

.object-list table {
    width: 100%;
    table-layout: fixed;
    border-collapse: collapse;
}

.object-list th {
    height: 19px;
    padding: 0 6px;
    text-align: left;
    font-weight: normal;
    background-color: #f0f0f0;
    border-right: 1px solid #888;
    border-bottom: 1px solid #888;
}

.object-list th:nth-child(-n+2) {
    width: 80px;
}

.object-list th:last-child {
    border-right: 0;
}

.object-list td {
    height: 18px;
    padding: 0 6px;
}

.object-list td:first-child {
    padding: 0 0 0 2px;
}

.object-name {
    display: flex;
    align-items: center;
    gap: 2px;
}

.object-name span {
    flex: 1;
    height: 16px;
    background-color: #0078d7;
}

.mini-eye {
    width: 15px;
    height: 14px;
}

.mini-rect {
    width: 14px;
    height: 14px;
}

.position-box {
    display: flex;
    justify-content: space-between;
    margin: 7px 23px 0 1px;
    padding: 2px 3px 4px 10px;
    border: 1px solid #a0a0a0;
}

.position-grid {
    display: grid;
    grid-template-columns: 14px 60px 60px;
    gap: 1px 2px;
    align-items: center;
}

.position-grid .col-head {
    text-align: center;
}

.position-buttons {
    display: flex;
    flex-direction: column;
    justify-content: flex-end;
    gap: 2px;
    padding-bottom: 2px;
}

.position-buttons .btn {
    width: 28px;
    height: 24px;
}

.position-buttons svg {
    width: 22px;
    height: 22px;
}

.position-buttons .anchor {
    background-color: #888;
}

.position-buttons .anchor svg {
    width: 18px;
    height: 18px;
}

.rect-actions {
    display: grid;
    grid-template-columns: 48px 62px 76px;
    gap: 1px;
    padding: 3px 0 0 3px;
}

.rect-actions .btn {
    height: 24px;
}

.round {
    width: 174px;
    margin-left: 16px;
}

.round-title {
    padding: 2px 0 5px;
}

.round-row {
    display: flex;
    justify-content: space-between;
}

.round .spin {
    width: 50px;
}

.round-preview {
    width: 74px;
    height: 38px;
    margin: 7px auto 4px 51px;
    border: 1px solid #a0a0a0;
}

.round .check {
    margin-top: 5px;
}

/* drawing tools */
.draw-column {
    width: 36px;
    padding-left: 2px;
}

.draw-tools {
    padding: 4px 0 0 1px;
    border-left: 1px solid #a0a0a0;
    border-bottom: 1px solid #a0a0a0;
}

.draw-tools::before {
    content: "";
    display: block;
    height: 2px;
    margin: 0 4px 2px 0;
    border-top: 1px solid #a0a0a0;
}

/* centre */
.center {
    flex: 1;
    min-width: 0;
    display: flex;
    flex-direction: column;
}

.edit-bar {
    display: flex;
    height: 32px;
    padding: 0 0 2px 3px;
    margin-left: 5px;
    border-left: 1px solid #a0a0a0;
}

.edit-bar .btn {
    width: 35px;
}

.edit-bar svg {
    width: 24px;
    height: 24px;
}

.edit-bar svg.wide {
    width: 26px;
}

.gap-xs {
    margin-left: 1px;
}

.gap-s {
    margin-left: 7px;
}

.gap-m {
    margin-left: 11px;
}

.gap-l {
    margin-left: 17px;
}

.canvas-frame {
    flex: 1;
    min-height: 0;
    display: grid;
    grid-template-columns: 20px 1fr 15px;
    grid-template-rows: 20px 1fr 16px;
    margin-right: 5px;
    background-color: #fff;
    border: 2px solid;
    border-color: #696969 #fff #fff #696969;
    border-right-width: 1px;
    border-bottom-width: 1px;
}

.ruler {
    width: 100%;
    height: 100%;
    font-family: "Liberation Sans", sans-serif;
    font-size: 9px;
}

.ruler line {
    stroke: #000;
    shape-rendering: crispEdges;
}

.scroll-v {
    grid-column: 3;
    grid-row: 1 / 4;
    display: flex;
    flex-direction: column;
    justify-content: space-between;
    align-items: center;
    padding: 4px 0 21px;
    background-color: #f0f0f0;
}

.scroll-v i {
    width: 15px;
    height: 17px;
    background-color: #cdcdcd;
}

.scroll-v svg,
.scroll-h svg,
.pen-list > div > svg {
    width: 9px;
    height: 9px;
}

.down {
    transform: rotate(180deg);
}

.left {
    transform: rotate(-90deg);
}

.right {
    transform: rotate(90deg);
}

.scroll-h {
    grid-column: 1 / 3;
    grid-row: 3;
    display: flex;
    justify-content: space-between;
    align-items: center;
    padding: 0 5px 0 2px;
    background-color: #f0f0f0;
}

.scroll-h i {
    width: 17px;
    height: 15px;
    background-color: #cdcdcd;
}

.stage {
    position: relative;
    display: grid;
    place-items: center;
    overflow: hidden;
}

.paper {
    width: 717px;
    height: 718px;
    border: 1px solid #000;
    box-shadow: 5px 5px 0 #777;
}

/* hatch dialog */
.dialog {
    position: absolute;
    left: 234px;
    top: 168px;
    width: 480px;
    padding-left: 4px;
    background-color: #d0d0d0;
    border-left: 1px solid #777;
}

.dialog-inner {
    background-color: #f0f0f0;
    border: 1px solid #666;
    border-right: 0;
    box-shadow: 0 1px 0 #bbb;
}

.dialog-title {
    height: 25px;
    display: flex;
    align-items: center;
    justify-content: space-between;
    padding: 0 9px 0 3px;
    background-color: #fff;
}

.dialog-title svg {
    width: 12px;
    height: 12px;
}

.dialog-body {
    display: flex;
    justify-content: space-between;
    padding: 10px 11px 53px 14px;
}

.hatch-form {
    width: 186px;
}

.contour-row {
    height: 26px;
    display: flex;
    align-items: center;
    justify-content: space-between;
    padding: 0 2px 0 5px;
}

.contour-row .btn {
    width: 50px;
    height: 24px;
}

.contour-row svg {
    width: 24px;
    height: 16px;
}

.hatch-set {
    display: flex;
    height: 25px;
    margin: 1px 2px 4px 5px;
    padding: 0 0 2px 13px;
    border: 1px solid #a0a0a0;
    gap: 30px;
}

.hatch-set .check + .check + .check {
    margin-left: -13px;
}

.options-row {
    display: flex;
    justify-content: space-between;
    padding: 0 6px 0 12px;
}

.options .check {
    height: 16px;
}

.type {
    text-align: center;
    margin-top: -3px;
}

.type .btn {
    width: 44px;
    height: 38px;
    margin-top: 3px;
}

.type svg {
    width: 34px;
    height: 28px;
}

.angle-grid {
    display: grid;
    grid-template-columns: 56px 33px 66px;
    grid-template-rows: 14px 24px;
    align-items: center;
    padding-left: 12px;
}

.angle-grid span {
    padding-left: 5px;
}

.angle-grid label {
    padding-left: 2px;
}

.angle-grid label[for="pen"] {
    text-align: center;
}

.combo {
    height: 23px;
    display: flex;
    align-items: center;
    padding-left: 3px;
    background-color: #fff;
    border: 1px solid #777;
}

.combo i {
    width: 18px;
    height: 16px;
    background-color: #000;
}

.combo select {
    appearance: none;
    flex: 1;
    padding-left: 5px;
}

.combo b {
    width: 17px;
    height: 21px;
    display: grid;
    place-items: center;
    background-color: #f0f0f0;
    border: 1px solid;
    border-color: #fff #696969 #696969 #fff;
    pointer-events: none;
}

.combo svg {
    width: 8px;
    height: 5px;
}

.form-row {
    position: relative;
    display: grid;
    grid-template-columns: 101px 50px 1fr;
    align-items: center;
    height: 21px;
}

.form-row label {
    padding-bottom: 2px;
}

.form-row span {
    padding-left: 6px;
}

.marked::after {
    content: "";
    position: absolute;
    left: 84px;
    right: 5px;
    top: -2px;
    height: 23px;
    background-color: rgba(255, 0, 0, .4);
}

.average {
    height: 15px;
    padding: 0 0 2px 2px;
}

.auto {
    height: 14px;
    padding-left: 12px;
}

.degree-row {
    display: flex;
    align-items: center;
    gap: 8px;
    padding: 2px 0 0 40px;
}

.degree-row .field {
    width: 69px;
    height: 20px;
}

.dialog-actions {
    width: 190px;
    display: flex;
    flex-direction: column;
    align-items: flex-end;
    padding-top: 1px;
}

.dialog-actions .btn {
    width: 114px;
    height: 31px;
    margin-bottom: 3px;
}

.dialog-actions .ok {
    padding-bottom: 0;
}

.dialog-actions .ok span {
    flex: 1;
    margin: 3px;
    border: 1px dotted #000;
    height: 23px;
    line-height: 19px;
}

.dialog-actions .undo {
    width: 151px;
    margin-top: 8px;
}

.dialog-actions .check {
    align-self: flex-start;
    margin-top: 16px;
}

/* mark controls */
.mark-bar {
    display: flex;
    height: 59px;
    padding: 8px 0 0 4px;
}

.mark-bar .big {
    width: 67px;
    height: 40px;
    margin: 2px 3px 0 0;
}

.mark-checks {
    width: 107px;
    display: flex;
    flex-direction: column;
    gap: 5px;
    padding-left: 1px;
    overflow: hidden;
}

.mark-checks .check {
    height: 18px;
}

.counts {
    display: grid;
    grid-template-columns: 40px 50px;
    grid-auto-rows: 18px;
    gap: 3px 9px;
    align-items: center;
    margin-left: 6px;
}

.counts label {
    overflow: hidden;
}

.mark-bar .reset {
    width: 22px;
    height: 21px;
    margin-left: 4px;
}

.mark-bar .param {
    width: 67px;
    height: 23px;
    margin: 23px 2px 0 1px;
}

.times {
    width: 89px;
    display: flex;
    flex-direction: column;
    gap: 6px;
}

.modes {
    margin-left: 2px;
}

.mark-bar .ready {
    width: 149px;
    height: 40px;
    margin: 2px 39px 0 auto;
    padding: 0 10px;
    font-family: "Liberation Sans", sans-serif;
    font-size: 14px;
    font-weight: bold;
}

.ready span {
    flex: 1;
    height: 35px;
    display: flex;
    align-items: center;
    gap: 20px;
    padding-left: 6px;
    background-color: #fff;
}

.ready i {
    width: 17px;
    height: 17px;
    border: 1px solid #800000;
    border-radius: 50%;
    background: radial-gradient(circle at 6px 6px, #fff 2px, #0f0 3px);
}

/* right column */
.right-panel {
    width: 214px;
    padding: 1px 0 0 4px;
    border-left: 1px solid #a0a0a0;
}

.right-panel .panel-title button {
    margin-right: 1px;
}

.pen-list {
    display: grid;
    grid-template-columns: 1fr 16px;
    grid-template-rows: 112px 16px;
    margin: 20px 17px 0 4px;
    border: 1px solid;
    border-color: #808080 #fff #fff #808080;
    background-color: #f0f0f0;
}

.pen-clip {
    overflow: hidden;
    background-color: #fff;
}

.pen-clip table {
    width: 100%;
    table-layout: fixed;
    border-collapse: collapse;
}

.pen-clip th {
    height: 18px;
    padding: 0 0 0 6px;
    text-align: left;
    font-weight: normal;
    background-color: #f0f0f0;
    border-right: 1px solid #888;
    border-bottom: 2px solid #888;
    overflow: hidden;
}

.pen-clip th:nth-child(1) {
    width: 91px;
}

.pen-clip th:nth-child(2) {
    width: 45px;
}

.pen-clip th:last-child {
    border-right: 0;
}

.pen-clip td {
    height: 13px;
    padding: 0 0 0 6px;
    font-family: "Liberation Sans", sans-serif;
    line-height: 13px;
}

.pen-clip td:first-child {
    display: flex;
    align-items: center;
    gap: 2px;
    padding: 0;
}

.pen-clip td svg {
    width: 11px;
    height: 11px;
}

.pen-clip td span {
    flex: 1;
    height: 12px;
    line-height: 12px;
    padding-left: 4px;
}

.pen-clip .selected span {
    color: #fff;
    background-color: #0078d7;
}

.pen-clip td:nth-child(2) {
    padding: 0 1px;
}

.pen-clip td i {
    height: 11px;
    border: 1px solid #000;
}

.pen-scroll-v {
    display: flex;
    flex-direction: column;
    align-items: center;
    padding: 5px 0 4px;
}

.pen-scroll-v i {
    width: 15px;
    height: 17px;
    margin: 4px 0 auto;
    background-color: #cdcdcd;
}

.pen-scroll-h {
    display: flex;
    align-items: center;
    gap: 4px;
    padding: 0 4px;
}

.pen-scroll-h i {
    width: 119px;
    height: 15px;
    margin-right: 14px;
    background-color: #cdcdcd;
}

.swatches {
    display: grid;
    grid-template-columns: repeat(8, 1fr);
    gap: 2px;
    margin: 5px 22px 4px 7px;
}

.swatches i {
    height: 18px;
}

.c0 { background-color: #000; }
.c1 { background-color: #00f; }
.c2 { background-color: #f00; }
.c3 { background-color: #0f0; }
.c4 { background-color: #f0f; }
.c5 { background-color: #ff0; }
.c6 { background-color: #ff8080; }
.c7 { background-color: #800000; }

.param-box {
    margin: 0 17px 0 4px;
    padding: 5px 4px 5px 2px;
    border: 1px solid #a0a0a0;
}

.param-box .check {
    padding-left: 2px;
}

.param-grid {
    display: grid;
    grid-template-columns: 107px 1fr;
    grid-auto-rows: 18px;
    gap: 3px;
    margin: 2px 2px 24px 0;
}

.param-actions {
    display: flex;
    justify-content: flex-end;
    gap: 6px;
    margin-top: 30px;
}

.param-actions .btn {
    height: 21px;
}

.wobble {
    width: 37px;
}

.wobble svg {
    width: 30px;
    height: 12px;
}

.advance {
    width: 83px;
}

.param-name {
    display: flex;
    margin: 5px 17px 1px 4px;
}

.param-name .btn {
    width: 72px;
    height: 18px;
}

.param-name .readout {
    flex: 1;
    padding-left: 1px;
}

.wide-btn {
    width: calc(100% - 20px);
    height: 24px;
    margin-left: 4px;
}

/* status */
.status-bar {
    height: 18px;
    display: flex;
    align-items: center;
    gap: 3px;
    border-top: 1px solid #a0a0a0;
}

.message {
    flex: 1;
    padding-left: 2px;
}

.cell {
    width: 55px;
    height: 16px;
    padding-left: 1px;
    border: 1px solid;
    border-color: #a0a0a0 #fff #fff #a0a0a0;
    overflow: hidden;
}

.coords {
    width: 106px;
    padding-left: 4px;
}

.status-bar svg {
    width: 14px;
    height: 14px;
    margin-left: 2px;
}

.taskbar {
    height: 7px;
    display: flex;
    background-color: #d3d3d3;
}

.taskbar i {
    width: 342px;
    margin-left: 52px;
    background-color: #fff;
}

.taskbar b {
    width: 48px;
    margin: 0 303px 0 auto;
    background-color: #ececec;
}
```
FILE: ruler.js
```
// the page is 110 mm wide and drawn 717px wide
const SCALE = 717 / 110
const NS = 'http://www.w3.org/2000/svg'
const cursor = {x: 20.188, y: 27.48}

function line(svg, x1, y1, x2, y2) {
    const el = document.createElementNS(NS, 'line')
    el.setAttribute('x1', x1)
    el.setAttribute('y1', y1)
    el.setAttribute('x2', x2)
    el.setAttribute('y2', y2)
    svg.appendChild(el)
}

function label(svg, value, x, y, rotate) {
    const el = document.createElementNS(NS, 'text')
    el.textContent = value
    el.setAttribute('x', x)
    el.setAttribute('y', y)
    el.setAttribute('text-anchor', 'middle')
    if (rotate) el.setAttribute('transform', `rotate(-90 ${x} ${y})`)
    svg.appendChild(el)
}

function drawRuler(svg, vertical) {
    svg.innerHTML = ''
    const box = svg.getBoundingClientRect()
    const length = vertical ? box.height : box.width
    const edge = (vertical ? box.width : box.height) - 1
    const limit = Math.floor(length / 2 / SCALE)

    for (let i = -limit; i <= limit; i++) {
        const pos = Math.floor(length / 2 + (vertical ? -i : i) * SCALE)
        const size = i % 10 === 0 ? 10 : i % 5 === 0 ? 8 : 5
        if (vertical) line(svg, edge - size, pos, edge, pos)
        else line(svg, pos, edge - size, pos, edge)

        if (i % 10 === 0) {
            if (vertical) label(svg, i, 8, pos, true)
            else label(svg, i, pos, 8, false)
        }
    }

    if (vertical) {
        const y = Math.floor(length / 2 - cursor.y * SCALE)
        line(svg, 0, y, edge, y)
        line(svg, edge, 0, edge, length)
    } else {
        const x = Math.floor(length / 2 + cursor.x * SCALE)
        line(svg, x, 0, x, edge)
        line(svg, 0, edge, length, edge)
    }
}

function draw() {
    drawRuler(document.getElementById('ruler-top'), false)
    drawRuler(document.getElementById('ruler-left'), true)
}

window.addEventListener('resize', draw)
draw()
```
